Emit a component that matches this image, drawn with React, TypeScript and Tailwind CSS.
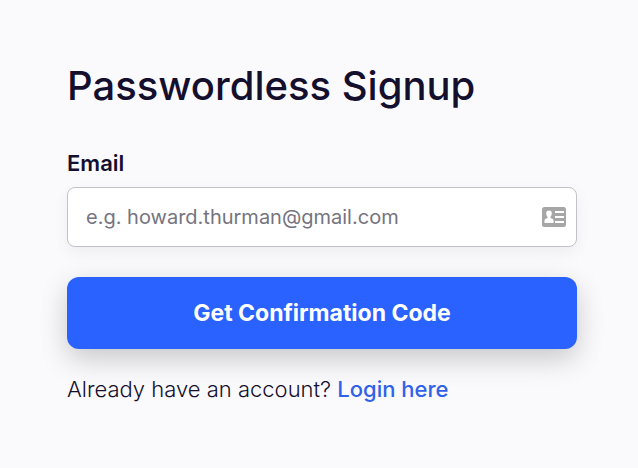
import { useState } from 'react'

export default function App() {
  const [email, setEmail] = useState('')

  return (
    <main className="min-h-screen bg-[#fafafd] pl-[67px] pr-[61px] pt-[60px] pb-12 text-[#150f2e] font-['Inter',sans-serif]">
      <h1 className="text-[40px] leading-[52px] font-medium">Passwordless Signup</h1>

      <form className="mt-8" onSubmit={(e) => e.preventDefault()}>
        <label htmlFor="email" className="block text-[22px] leading-[38px] font-semibold">
          Email
        </label>
        <div className="relative mt-[5px]">
          <input
            id="email"
            type="email"
            value={email}
            onChange={(e) => setEmail(e.target.value)}
            placeholder="e.g. howard.thurman@gmail.com"
            className="block h-[60px] w-full rounded-lg border border-[#c3c2c8] bg-white pl-[18px] pr-14 text-[20px] shadow-[0_6px_16px_rgba(0,0,0,0.05)] placeholder:text-[#757480]"
          />
          <svg viewBox="0 0 24 20" className="absolute right-[11px] top-5 h-5 w-6" aria-hidden="true">
            <rect width="24" height="20" rx="2.5" fill="#a6a6a6" />
            <path
              d="M7 3.5a2.8 2.8 0 0 1 2.8 3q0 2-1.3 3.2v1.3q3 .7 3 2.3V16h-9v-2.700q0-1.600 3-2.300V9.700Q4.200 8.500 4.200 6.500A2.800 2.800 0 0 1 7 3.500z"
              fill="#fff"
            />
            <path d="M13 4h9v2h-9zM13 9h9v2h-9zM13 14h9v2h-9z" fill="#fff" />
          </svg>
        </div>

        <button
          type="submit"
          className="mt-[30px] h-[72px] w-full rounded-xl bg-[#2962ff] text-[23px] font-bold text-white shadow-[0_10px_28px_rgba(0,0,0,0.2)]"
        >
          Get Confirmation Code
        </button>
      </form>

      <p className="mt-6 text-[22px] leading-8 font-light">
        Already have an account?{' '}
        <a href="#login" className="font-medium text-[#2f62e8]">
          Login here
        </a>
      </p>
    </main>
  )
}
